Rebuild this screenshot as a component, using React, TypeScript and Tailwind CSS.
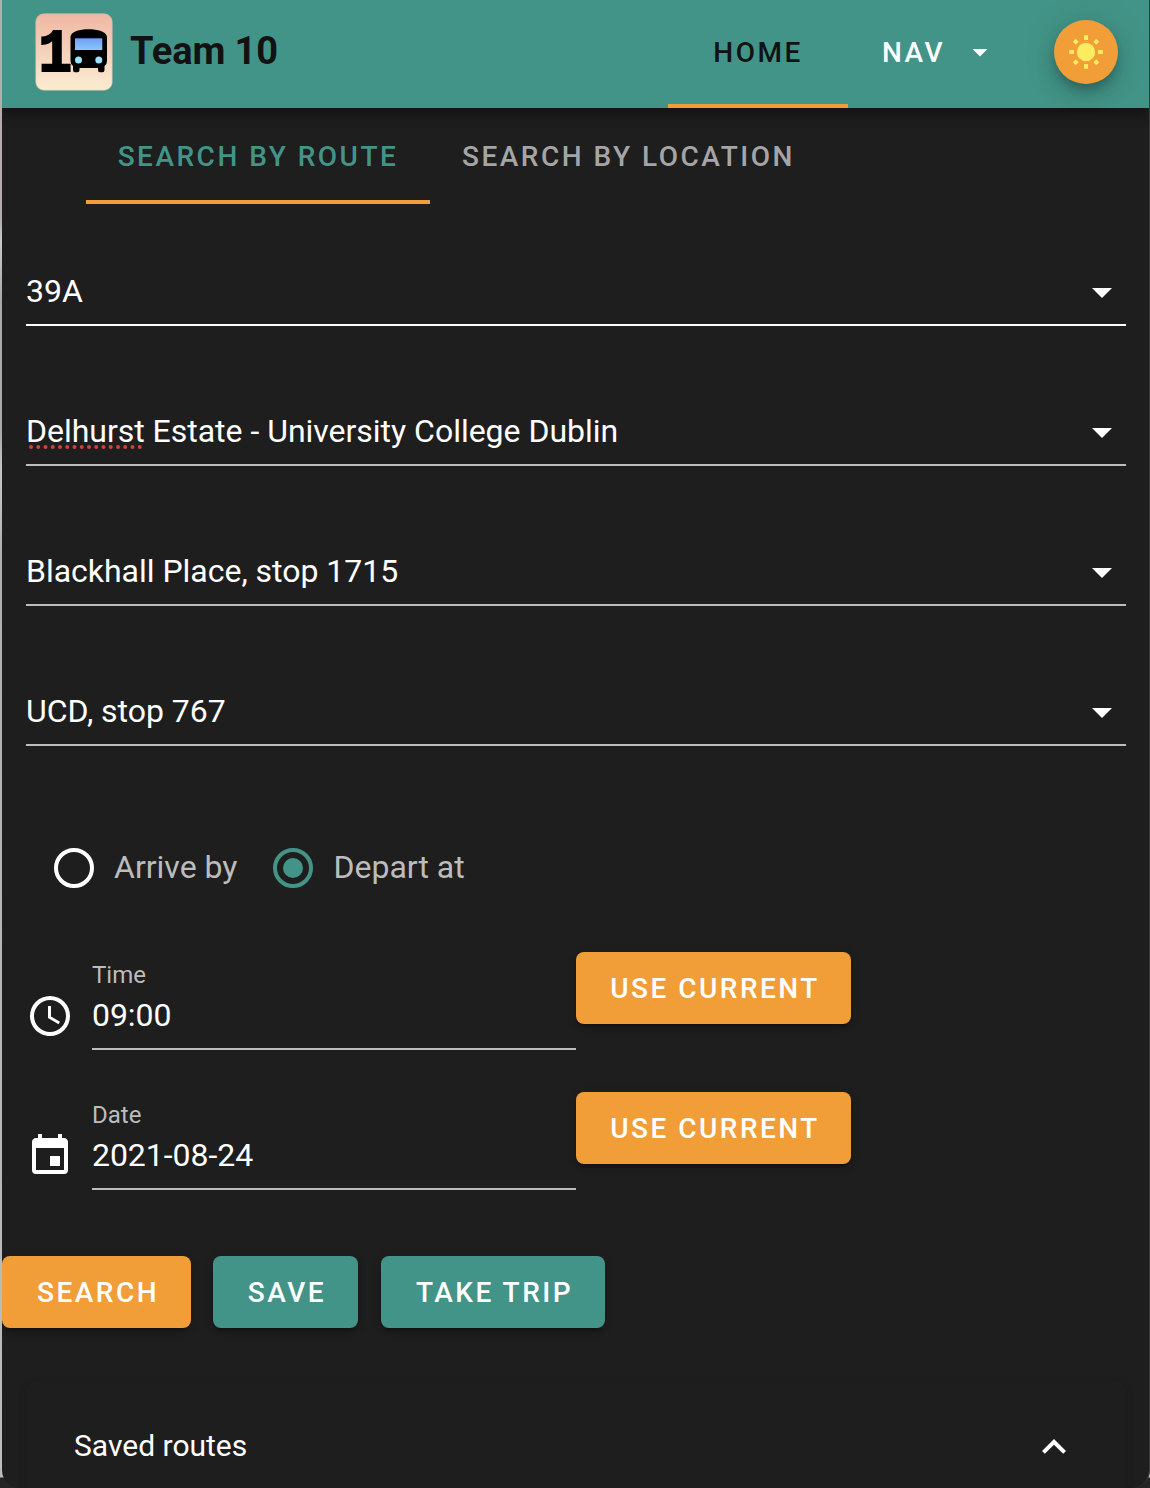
import React from "react";

const raised = "shadow-[0_6px_2px_-4px_rgba(0,0,0,0.2),0_4px_4px_0_rgba(0,0,0,0.14),0_2px_10px_0_rgba(0,0,0,0.12)]";

function Icon({ d, className = "" }: { d: string; className?: string }) {
  return (
    <svg viewBox="0 0 24 24" className={`block size-12 shrink-0 fill-current ${className}`}>
      <path d={d} />
    </svg>
  );
}

const MENU_DOWN = "M7,10L12,15L17,10H7Z";
const CHEVRON_UP = "M16.59,15.42L12,10.83L7.41,15.42L6,14L12,8L18,14L16.59,15.42Z";
const CLOCK =
  "M12,20A8,8 0 0,0 20,12A8,8 0 0,0 12,4A8,8 0 0,0 4,12A8,8 0 0,0 12,20M12,2A10,10 0 0,1 22,12A10,10 0 0,1 12,22C6.47,22 2,17.5 2,12A10,10 0 0,1 12,2M12.5,7V12.25L17,14.92L16.25,16.15L11,13V7H12.5Z";
const CALENDAR =
  "M19,19H5V8H19M16,1V3H8V1H6V3H5C3.89,3 3,3.89 3,5V19A2,2 0 0,0 5,21H19A2,2 0 0,0 21,19V5C21,3.89 20.1,3 19,3H18V1M17,12H12V17H17V12Z";

function Logo() {
  return (
    <svg viewBox="0 0 78 78" className="block size-[78px]">
      <defs>
        <linearGradient id="sky" x1="0" y1="0" x2="0" y2="1">
          <stop offset="0" stopColor="#f0b7a3" />
          <stop offset="1" stopColor="#fbecd2" />
        </linearGradient>
        <linearGradient id="glass" x1="0" y1="0" x2="0" y2="1">
          <stop offset="0" stopColor="#6f9ff5" />
          <stop offset="1" stopColor="#8ac6ff" />
        </linearGradient>
      </defs>
      <rect x="0.8" y="0.8" width="76.400" height="76.400" rx="8" fill="url(#sky)" stroke="#c9c4a8" strokeWidth="0.6" />
      <text
        transform="translate(3.400 58.300) scale(0.9 1)"
        fontFamily="'Liberation Mono', monospace"
        fontWeight="700"
        fontSize="62"
        stroke="#000"
        strokeWidth="2.200"
      >
        1
      </text>
      <path d="M35.500 24C35.500 18.500 45 16.200 53.500 16.200S72 18.500 72 24V48Q72 51.500 69.500 53V57Q69.500 59.300 67.500 59.300H65Q63 59.300 63 57V55H44.500V57Q44.500 59.300 42.500 59.300H40Q38 59.300 38 57V53Q35.500 51.500 35.500 48Z" />
      <rect x="40" y="25.300" width="27.300" height="11.700" fill="url(#glass)" />
      <circle cx="43.500" cy="47" r="3.500" fill="#9be3fb" />
      <circle cx="63.800" cy="47" r="3.500" fill="#9be3fb" />
    </svg>
  );
}

function Sun() {
  return (
    <svg viewBox="-24 -24 48 48" className="block size-12">
      <circle r="9.200" fill="#fdec60" />
      {[0, 45, 90, 135, 180, 225, 270, 315].map((angle) => (
        <rect
          key={angle}
          x="-2"
          y={angle % 90 === 0 ? -16.8 : -16.6}
          width="4"
          height={angle % 90 === 0 ? 4.8 : 4.2}
          fill="#fdec60"
          transform={`rotate(${angle})`}
        />
      ))}
    </svg>
  );
}

function SelectField({ children, focused = false }: { children: React.ReactNode; focused?: boolean }) {
  return (
    <div
      className={`flex h-[70px] items-center justify-between border-b-2 pt-0.5 text-[32px] leading-10 tracking-[-0.02px] ${
        focused ? "border-white" : "border-[#bcbcbc]"
      }`}
    >
      <span>{children}</span>
      <Icon d={MENU_DOWN} className="mt-0.5" />
    </div>
  );
}

function Button({ children, className }: { children: React.ReactNode; className: string }) {
  return (
    <button
      className={`flex h-[72px] shrink-0 items-center justify-center rounded-lg pt-px pl-[3px] text-[28px] font-medium tracking-[2.5px] ${raised} ${className}`}
    >
      {children}
    </button>
  );
}

function Radio({ label, checked = false }: { label: string; checked?: boolean }) {
  return (
    <label className="flex items-center gap-4">
      <svg viewBox="0 0 24 24" className={`size-12 ${checked ? "text-[#439488]" : "text-white"}`}>
        <circle cx="12" cy="12" r="9" fill="none" stroke="currentColor" strokeWidth="2" />
        {checked && <circle cx="12" cy="12" r="5" fill="currentColor" />}
      </svg>
      <span className="pb-0.5 text-[32px] leading-10 text-[#bcbcbc]">{label}</span>
    </label>
  );
}

function PickerRow({ icon, label, value }: { icon: string; label: string; value: string }) {
  return (
    <div className="flex h-[140px] items-start">
      <Icon d={icon} className="mt-10" />
      <div className="ml-[18px] flex h-[98px] w-[484px] flex-col border-b-2 border-[#bcbcbc]">
        <span className="mt-[7px] h-8 text-2xl leading-8 text-[#bcbcbc]">{label}</span>
        <span className="mt-1 text-[32px] leading-10 tracking-[-0.05px]">{value}</span>
      </div>
      <Button className="w-[275px] bg-[#f19e38]">USE CURRENT</Button>
    </div>
  );
}

export default function App() {
  return (
    <div className="h-[1488px] w-[1150px] overflow-hidden bg-[linear-gradient(to_bottom,#b3adad_0,#b3adad_220px,#c9cbca_240px,#a9a9a9_300px,#a9a9a9_430px,#c6c6c6_470px,#b4afaf_560px,#bdbdbd_1477px,#242424_1478px)] pl-0.5 font-['Roboto',sans-serif] text-white">
      <div className="flex h-full flex-col overflow-hidden rounded-b-[18px] border-r border-[#3a3a3a] bg-[#1e1e1e]">
        <header className="z-10 flex h-[108px] shrink-0 bg-[#439488] pl-[33px] shadow-[0_4px_8px_-1px_rgba(0,0,0,0.2),0_8px_10px_0_rgba(0,0,0,0.14),0_2px_20px_0_rgba(0,0,0,0.12)]">
          <div className="mt-[13px]">
            <Logo />
          </div>
          <div className="ml-[17px] flex h-[102px] w-[538px] items-center text-[38px] font-bold tracking-[-0.1px] text-[#121212]">Team 10</div>
          <div className="flex w-[180px] items-center justify-center border-b-4 border-[#f19e38] pt-0.5 text-[28px] font-medium tracking-[2.5px] text-[#121212]">
            HOME
          </div>
          <div className="flex h-[104px] w-[206px] items-center pl-[34px]">
            <span className="w-[74px] pt-0.5 text-[28px] font-medium tracking-[2.5px]">NAV</span>
            <svg viewBox="0 0 48 48" className="size-12 fill-white">
              <path d="M16.500 21H31.500L24 28.500Z" />
            </svg>
          </div>
          <div className="mt-5 flex size-16 items-center justify-center rounded-full bg-[#f19e38] shadow-[0_6px_10px_-2px_rgba(0,0,0,0.2),0_12px_20px_0_rgba(0,0,0,0.14),0_2px_36px_0_rgba(0,0,0,0.12)]">
            <Sun />
          </div>
        </header>

        <nav className="flex h-24 shrink-0 pl-[84px] text-[28px] font-medium tracking-[2.5px]">
          <div className="flex w-[344px] items-center justify-center border-b-4 border-[#f19e38] pt-1.5 text-[#439488]">
            SEARCH BY ROUTE
          </div>
          <div className="flex items-center px-8 pt-px text-[#a5a5a5]">SEARCH BY LOCATION</div>
        </nav>

        <section className="flex flex-col gap-[70px] pt-[52px] pr-[23px] pl-6">
          <SelectField focused>39A</SelectField>
          <SelectField>
            <span className="relative">
              Delhurst
              <svg viewBox="0 0 116 4" className="absolute top-[33px] left-[2px] h-1 w-[116px]">
                <path d="M3 2H112" stroke="#c8453b" strokeWidth="4" strokeLinecap="round" strokeDasharray="0 7.250" />
              </svg>
            </span>{" "}
            Estate - University College Dublin
          </SelectField>
          <SelectField>Blackhall Place, stop 1715</SelectField>
          <SelectField>UCD, stop 767</SelectField>
        </section>

        <div className="mt-[98px] flex h-12 shrink-0 gap-8 pl-12">
          <Radio label="Arrive by" />
          <Radio label="Depart at" checked />
        </div>

        <section className="mt-[60px] h-[304px] shrink-0 pl-6">
          <PickerRow icon={CLOCK} label="Time" value="09:00" />
          <PickerRow icon={CALENDAR} label="Date" value="2021-08-24" />
        </section>

        <div className="flex shrink-0">
          <Button className="w-[189px] bg-[#f19e38]">SEARCH</Button>
          <Button className="ml-[22px] w-[145px] bg-[#439488]">SAVE</Button>
          <Button className="ml-[23px] w-[224px] bg-[#439488]">TAKE TRIP</Button>
        </div>

        <section className="mt-[54px] mr-[23px] ml-6 flex h-[130px] shrink-0 items-center justify-between rounded-t-lg bg-[#1e1e1e] pr-12 pl-12 text-[30px] shadow-[0_2px_8px_0_rgba(0,0,0,0.12)]">
          <span className="pb-1">Saved routes</span>
          <Icon d={CHEVRON_UP} />
        </section>
      </div>
    </div>
  );
}
